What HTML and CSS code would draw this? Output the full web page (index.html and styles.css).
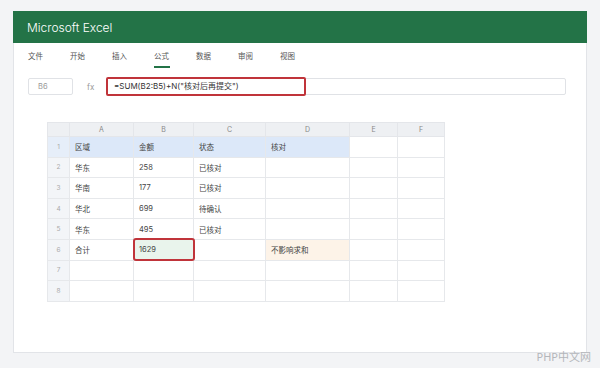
FILE: index.html
```html
<!DOCTYPE html>
<html>
<head>
<meta charset="utf-8">
<title>Microsoft Excel</title>
<link rel="stylesheet" href="styles.css">
</head>
<body>
<div class="window">
  <div class="titlebar">Microsoft Excel</div>
  <div class="tabs">
    <span class="tab">文件</span>
    <span class="tab">开始</span>
    <span class="tab">插入</span>
    <span class="tab active">公式</span>
    <span class="tab">数据</span>
    <span class="tab">审阅</span>
    <span class="tab">视图</span>
  </div>
  <div class="formula-row">
    <div class="namebox">B6</div>
    <div class="fx">fx</div>
    <div class="input">
      <div class="formula">=SUM(B2:B5)+N("核对后再提交")</div>
    </div>
  </div>
  <table class="grid">
    <colgroup>
      <col class="c-num"><col class="c-a"><col class="c-b"><col class="c-c"><col class="c-d"><col class="c-e"><col class="c-f">
    </colgroup>
    <tr class="colhead"><th></th><th>A</th><th>B</th><th>C</th><th>D</th><th>E</th><th>F</th></tr>
    <tr class="head"><td class="num">1</td><td>区域</td><td>金额</td><td>状态</td><td>核对</td><td class="plain"></td><td class="plain"></td></tr>
    <tr><td class="num">2</td><td>华东</td><td>258</td><td>已核对</td><td></td><td></td><td></td></tr>
    <tr><td class="num">3</td><td>华南</td><td>177</td><td>已核对</td><td></td><td></td><td></td></tr>
    <tr><td class="num">4</td><td>华北</td><td>699</td><td>待确认</td><td></td><td></td><td></td></tr>
    <tr><td class="num">5</td><td>华东</td><td>495</td><td>已核对</td><td></td><td></td><td></td></tr>
    <tr><td class="num">6</td><td>合计</td><td class="sel">1629</td><td></td><td class="note">不影响求和</td><td></td><td></td></tr>
    <tr><td class="num">7</td><td></td><td></td><td></td><td></td><td></td><td></td></tr>
    <tr><td class="num">8</td><td></td><td></td><td></td><td></td><td></td><td></td></tr>
  </table>
</div>
<div class="watermark">PHP中文网</div>
</body>
</html>
```

FILE: styles.css
```css
body {
  margin: 0;
  background: #f3f4f6;
  font-family: 'Inter', 'Noto Sans CJK SC', sans-serif;
  color: #444;
  height: 368px;
  overflow: hidden;
  position: relative;
}

.window {
  margin: 11px 13px 0 13px;
  height: 342px;
  background: #fff;
  border: 1px solid #e2e4e8;
  border-top: 0;
  box-sizing: border-box;
}

.titlebar {
  height: 32px;
  background: #237347;
  color: #fff;
  font-size: 12px;
  font-weight: 300;
  line-height: 33px;
  padding-left: 14px;
  margin: 0 -1px;
}

.tabs {
  display: flex;
  padding: 8px 0 0 14px;
  height: 17px;
}

.tab {
  width: 42px;
  font-size: 7.5px;
  color: #555;
  line-height: 12px;
}

.tab.active {
  position: relative;
}

.tab.active::after {
  content: '';
  position: absolute;
  left: 0;
  top: 15px;
  width: 16px;
  height: 2px;
  background: #237347;
}

.formula-row {
  display: flex;
  align-items: center;
  padding: 9px 0 0 14px;
  height: 19px;
}

.namebox {
  width: 45px;
  height: 17px;
  border: 1px solid #e0e2e6;
  border-radius: 2px;
  box-sizing: border-box;
  font-size: 7.5px;
  color: #999;
  line-height: 15px;
  padding-left: 9px;
}

.fx {
  width: 33px;
  padding-left: 14px;
  box-sizing: border-box;
  font-size: 8px;
  color: #999;
}

.input {
  width: 460px;
  height: 17px;
  border: 1px solid #e0e2e6;
  border-radius: 2px;
  box-sizing: border-box;
  position: relative;
}

.formula {
  position: absolute;
  left: -1px;
  top: -2px;
  width: 200px;
  height: 19px;
  border: 2px solid #c0343a;
  border-radius: 2px;
  box-sizing: border-box;
  font-size: 8px;
  color: #333;
  line-height: 15px;
  padding-left: 6px;
}

.grid {
  margin: 26px 0 0 33px;
  border-collapse: collapse;
  table-layout: fixed;
  width: 397px;
  font-size: 7.5px;
}

.c-num { width: 22px; }
.c-a { width: 64px; }
.c-b { width: 60px; }
.c-c { width: 72px; }
.c-d { width: 84px; }
.c-e { width: 48px; }
.c-f { width: 47px; }

.grid th {
  height: 13px;
  padding: 0;
  background: #eef0f3;
  border: 1px solid #e4e6ea;
  font-weight: normal;
  color: #888;
  font-size: 7px;
}

.grid td {
  height: 19.6px;
  border: 1px solid #e6e8eb;
  padding: 0 0 0 5px;
  color: #444;
  white-space: nowrap;
}

.grid td.num {
  background: #f3f5f8;
  color: #aaa;
  text-align: center;
  padding: 0;
  font-size: 6.5px;
}

.grid tr.head td {
  background: #dce8f9;
}

.grid tr.head td.num {
  background: #e6eef9;
}

.grid tr.head td.plain {
  background: #fff;
}

.grid td.sel {
  background: #e9f4ec;
  outline: 2px solid #c0343a;
  outline-offset: -1px;
  border-radius: 2px;
}

.grid td.note {
  background: #fdf3e8;
}

.watermark {
  position: absolute;
  right: 9px;
  top: 348px;
  font-size: 11px;
  color: #b4b6ba;
  font-family: 'Noto Sans', 'Noto Sans CJK SC', sans-serif;
}
```
